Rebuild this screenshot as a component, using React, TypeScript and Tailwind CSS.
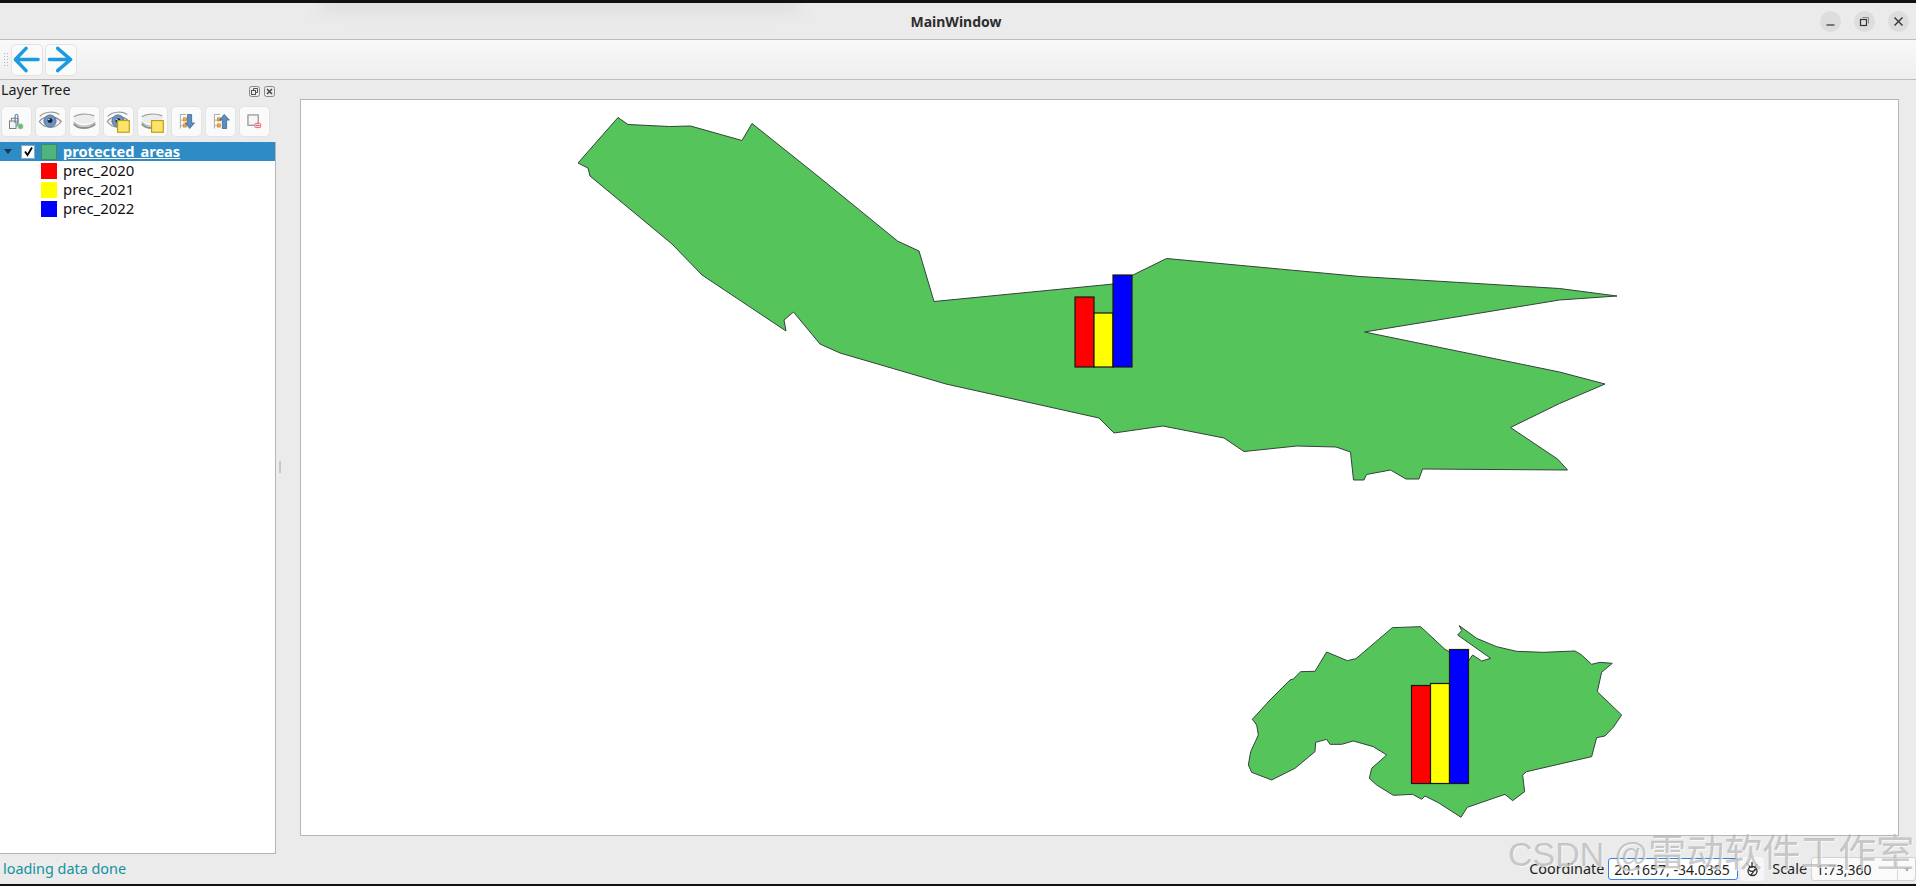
import type { ReactNode } from "react";

const mainArea = "578,163 588,168 590,176 672,244 702,275 786,331 784,320 793.5,312 820,344 840,353 946,384 1099,418 1114,433 1163,426 1224,438 1244,451.5 1297,446 1336,447 1350.5,452 1353.5,480 1364,480 1366.5,474.5 1390.5,470 1406,479 1419,479 1422.5,469 1567.5,470 1557.5,459 1510.5,427.5 1559.5,403.5 1605,384 1559.5,372 1364.5,332 1559.5,300 1617,296 1559.5,288.5 1360,276.5 1166.5,258.5 1133,275 1113.5,284 934,301.5 919,251 897.5,241 819,177 752,123.5 742,140.5 690.5,126 669.5,126.5 628,124.5 618,117.5";
const smallArea = "67,328 120,270 180,210 190,207 212,185 255,184 290,126 352,152 378,146 487,53 572,50 645,118 658,125 716,152 728,135 755,153 782,145 683,75 695,62 688,47 740,85 800,110 860,124 940,127 1035,123 1055,135 1085,163 1110,157 1147,160 1115,187 1102,245 1175,315 1150,352 1125,378 1100,383 1085,440 890,485 878,495 884,545 848,572 825,553 712,592 693,622 625,578 585,558 575,568 548,553 490,556 440,525 418,505 425,475 470,435 430,410 370,393 335,403 300,403 290,388 257,397 255,425 195,475 125,510 65,487 55,465 62,425 85,375 80,345";

function Chart({ x, base, heights, w }: { x: number; base: number; heights: number[]; w: number }) {
    const colors = ["#ff0000", "#ffff00", "#0000ff"];
    return (
        <g stroke="#161616" strokeWidth="1.2">
            {heights.map((h, i) => (
                <rect key={i} x={x + i * w} y={base - h} width={w} height={h} fill={colors[i]} />
            ))}
        </g>
    );
}

function MapView() {
    return (
        <svg width="1597" height="735" viewBox="301 100 1597 735" className="block">
            <polygon points={mainArea} fill="#55c45b" stroke="#33423a" strokeWidth="1" strokeLinejoin="round" />
            <Chart x={1075} base={367} heights={[70, 54, 92]} w={19} />
            <g transform="translate(1230 610) scale(0.3333)">
                <polygon points={smallArea} fill="#55c45b" stroke="#33423a" strokeWidth="3" strokeLinejoin="round" />
            </g>
            <Chart x={1411.5} base={783.5} heights={[98, 100, 134]} w={19} />
        </svg>
    );
}

function ToolButton({ children, size }: { children: ReactNode; size: string }) {
    return (
        <div className={`${size} rounded-[5px] bg-[#fafafa] border border-[#e3e3e3] flex items-center justify-center shrink-0`}>
            {children}
        </div>
    );
}

function Arrow({ back }: { back?: boolean }) {
    return (
        <svg width="31" height="31" viewBox="0 0 31 31" fill="none" stroke="#1b9ae0" strokeWidth="3.6" strokeLinecap="round" strokeLinejoin="round">
            {back ? <path d="M14.5 4 3.5 15.5l11 11.5M4 15.5h23" /> : <path d="M12 4l13.5 11.5L12 27M3.5 15.5h22" />}
        </svg>
    );
}

function Eye() {
    return (
        <>
            <path d="M4 10C9 5 19 4 25 8" fill="none" stroke="#9a9a9a" strokeWidth="1.2" />
            <path d="M3.5 15.5C8 9 20 8 27 15.5 21 24 9 23.5 3.5 15.5Z" fill="#f1f1f1" stroke="#8e8e8e" strokeWidth="1.2" />
            <circle cx="15" cy="15" r="6.5" fill="#6d93c1" stroke="#4c6f9b" strokeWidth="1" />
            <circle cx="15" cy="14.5" r="2.6" fill="#14202e" />
            <circle cx="13.8" cy="13.4" r="0.8" fill="#ffffff" />
        </>
    );
}

function ClosedEye() {
    return (
        <>
            <path d="M4 11C9 7 20 6 26 10 27 15 24 18 15 18 8 18 4 16 4 11Z" fill="#ececec" />
            <path d="M4 10.5C9 7 19 6.5 26 9.5" fill="none" stroke="#a2a2a2" strokeWidth="1.2" />
            <path d="M4 16C9 22 21 22 27 16" fill="none" stroke="#bdbdbd" strokeWidth="1.4" />
            <path d="M4 18C9 24 21 24 27 18" fill="none" stroke="#8f8f8f" strokeWidth="2" />
        </>
    );
}

function YellowCorner() {
    return <rect x="14.5" y="14.5" width="12.500" height="12.500" fill="#fbe36c" stroke="#c49c08" strokeWidth="1.2" />;
}

function TreeArrow({ up }: { up?: boolean }) {
    return (
        <>
            <path d="M9 8h6M9 8v15M9 14h4M9 20h4" fill="none" stroke="#a5a5a5" strokeWidth="1" />
            <rect x="12" y="11.5" width="3.5" height="3.5" fill="#f2a53a" stroke="#d0801a" strokeWidth="0.6" />
            <rect x="12" y="18" width="3.5" height="3.5" fill="#f2a53a" stroke="#d0801a" strokeWidth="0.6" />
            {up ? (
                <path d="M19 8l-5 6h3v9h4.500v-9h3L19 8Z" transform="translate(0.5 0)" fill="#5c8cc0" stroke="#34608f" strokeWidth="0.8" />
            ) : (
                <path d="M16.500 8H21v9h3l-5 6-5-6h2.500V8Z" fill="#5c8cc0" stroke="#34608f" strokeWidth="0.8" />
            )}
        </>
    );
}

function DockIcon({ children }: { children: ReactNode }) {
    return <svg width="31" height="31" viewBox="0 0 31 31">{children}</svg>;
}

function DockButtons() {
    return (
        <div className="flex gap-[3px] pl-[1px] h-[31px] mt-[6px]">
            <ToolButton size="w-[31px] h-[31px]">
                <DockIcon>
                    <rect x="10" y="12" width="7" height="8" fill="#f3f3f3" stroke="#777777" />
                    <rect x="8" y="15" width="7" height="8" fill="#f3f3f3" stroke="#777777" />
                    <path d="M14 17V9.500a1.500 1.500 0 0 1 3 0V17M17 10v9" fill="none" stroke="#5d7ea6" strokeWidth="1.2" />
                    <rect x="17" y="18" width="5.500" height="5.500" rx="1.500" fill="#6dbb7b" stroke="#cfe8d4" strokeWidth="0.6" />
                </DockIcon>
            </ToolButton>
            <ToolButton size="w-[31px] h-[31px]"><DockIcon><Eye /></DockIcon></ToolButton>
            <ToolButton size="w-[31px] h-[31px]"><DockIcon><ClosedEye /></DockIcon></ToolButton>
            <ToolButton size="w-[31px] h-[31px]"><DockIcon><Eye /><YellowCorner /></DockIcon></ToolButton>
            <ToolButton size="w-[31px] h-[31px]"><DockIcon><ClosedEye /><YellowCorner /></DockIcon></ToolButton>
            <ToolButton size="w-[31px] h-[31px]"><DockIcon><TreeArrow /></DockIcon></ToolButton>
            <ToolButton size="w-[31px] h-[31px]"><DockIcon><TreeArrow up /></DockIcon></ToolButton>
            <ToolButton size="w-[31px] h-[31px]">
                <DockIcon>
                    <rect x="8.500" y="8.500" width="11" height="11" fill="#f6f6f6" stroke="#8a8a8a" strokeWidth="1.200" />
                    <rect x="16" y="17.500" width="6" height="4.500" rx="0.800" fill="#f8f8f8" stroke="#ee5a64" strokeWidth="1" />
                    <path d="M17 19.750h4" stroke="#ee5a64" strokeWidth="1.400" />
                </DockIcon>
            </ToolButton>
        </div>
    );
}

function LegendRow({ color, label }: { color: string; label: string }) {
    return (
        <div className="h-[19px] flex items-center pl-[41px] text-[14.9px] text-[#101010]">
            <div className={`w-[16px] h-[16px] ${color}`} />
            <span className="ml-[6px]">{label}</span>
        </div>
    );
}

function LayerTree() {
    return (
        <div className="flex-1 mt-[5px] bg-white border-r border-b border-[#b6b6b6] min-h-0">
            <div className="h-[19px] bg-[#2f8bc6] flex items-center">
                <div className="w-0 h-0 ml-[4px] border-x-[4px] border-x-transparent border-t-[5px] border-t-[#173a55]" />
                <div className="ml-[9px] w-[14px] h-[14px] bg-white border border-[#8aa9bf] flex items-center justify-center">
                    <svg width="11" height="11" viewBox="0 0 11 11" fill="none" stroke="#000000" strokeWidth="1.8">
                        <path d="M2 5.500 4.500 9 9 1.500" />
                    </svg>
                </div>
                <div className="ml-[6px] w-[16px] h-[16px] bg-[#4fb37d] border border-[#3c8a60]" />
                <span className="ml-[6px] text-[14.6px] font-bold text-white underline">protected_areas</span>
            </div>
            <LegendRow color="bg-[#ff0000]" label="prec_2020" />
            <LegendRow color="bg-[#ffff00]" label="prec_2021" />
            <LegendRow color="bg-[#0000ff]" label="prec_2022" />
        </div>
    );
}

function DockHeader() {
    return (
        <div className="h-[20px] flex items-center justify-between pl-[1px] pr-[1px]">
            <span className="text-[14.3px] text-[#1c1c1c]">Layer Tree</span>
            <div className="flex gap-[4px] mt-[2px]">
                <svg width="11" height="11" viewBox="0 0 11 11" fill="none" stroke="#555555">
                    <rect x="0.500" y="0.500" width="10" height="10" rx="2" stroke="#888888" />
                    <rect x="2.500" y="4.500" width="4" height="4" />
                    <path d="M4.500 4.500v-2h4v4h-2" />
                </svg>
                <svg width="11" height="11" viewBox="0 0 11 11" fill="none" stroke="#444444">
                    <rect x="0.500" y="0.500" width="10" height="10" rx="2" stroke="#888888" />
                    <path d="M3 3l5 5M8 3 3 8" strokeWidth="1.500" />
                </svg>
            </div>
        </div>
    );
}

function WindowButton({ children }: { children: ReactNode }) {
    return (
        <div className="w-[21px] h-[21px] rounded-full bg-[#dddddd] flex items-center justify-center">
            <svg width="11" height="11" viewBox="0 0 11 11" fill="none" stroke="#333333" strokeWidth="1">
                {children}
            </svg>
        </div>
    );
}

function TitleBar() {
    return (
        <div className="relative h-[36px] flex items-center bg-[#ebebeb] overflow-hidden">
            <div className="absolute left-[320px] -top-[4px] w-[480px] h-[10px] bg-[#d6d6d6] blur-[8px]" />
            <div className="flex-1" />
            <span className="relative ml-[3px] text-[14px] font-bold text-[#2e2e2e]">MainWindow</span>
            <div className="flex-1 flex justify-end gap-[13px] pr-[7px]">
                <WindowButton><path d="M1.500 9h8" strokeWidth="1.200" /></WindowButton>
                <WindowButton>
                    <rect x="1.500" y="3.500" width="6" height="6" strokeWidth="1.200" />
                    <path d="M3.500 1.500h6v6" stroke="#888888" />
                </WindowButton>
                <WindowButton><path d="M1.500 1.500l8 8M9.500 1.500l-8 8" strokeWidth="1.400" /></WindowButton>
            </div>
        </div>
    );
}

function StatusBar() {
    return (
        <div className="h-[30px] flex items-center pl-[3px] text-[14.4px] text-[#222222] bg-[#ebebeb]">
            <span className="text-[#14919f]">loading data done</span>
            <div className="flex-1" />
            <span>Coordinate</span>
            <div className="ml-[4px] w-[130px] h-[22px] bg-white border border-[#3584e4] rounded-[3px] flex items-center pl-[5px] text-[14px]">
                20.1657, -34.0385
            </div>
            <div className="ml-[2px] w-[24px] h-[24px] rounded-[4px] bg-[#f6f6f6] flex items-center justify-center">
                <svg width="18" height="18" viewBox="0 0 18 18" fill="none" stroke="#2d2d2d">
                    <circle cx="9.500" cy="11" r="4.500" strokeWidth="1.300" />
                    <path d="M4 3l3.500 5M9 2v6M14 4l-2.500 4M6 10c2 2 5 2 7-1M8 15c1-2 3-3 4-6" strokeWidth="1.300" />
                </svg>
            </div>
            <span className="ml-[8px]">Scale</span>
            <div className="ml-[4px] w-[105px] h-[24px] bg-[#fafafa] border border-[#d2d2d2] rounded-[3px] flex items-center pl-[4px] text-[14px]">
                <span className="flex-1">1:73,360</span>
                <div className="w-[18px] h-full border-l border-[#d8d8d8] flex items-center justify-center">
                    <div className="w-0 h-0 border-x-[3px] border-x-transparent border-t-[3px] border-t-[#333333]" />
                </div>
            </div>
        </div>
    );
}

export default function App() {
    return (
        <div className="relative w-[1916px] h-[886px] flex flex-col overflow-hidden bg-[#ebebeb] font-['Noto_Sans',sans-serif]">
            <div className="h-[3px] bg-[#111111]" />
            <TitleBar />

            {/* toolbar */}
            <div className="h-[41px] flex items-center gap-[2px] pl-[3px] border-y border-[#bdbdbd] bg-gradient-to-b from-[#f9f9f9] to-[#eeeeee]">
                <div className="w-[6px] h-[16px] bg-[radial-gradient(#b5b5b5_1px,transparent_1px)] bg-[length:3px_3px]" />
                <ToolButton size="w-[32px] h-[32px]"><Arrow back /></ToolButton>
                <ToolButton size="w-[32px] h-[32px]"><Arrow /></ToolButton>
            </div>

            <div className="flex-1 flex min-h-0">
                <div className="w-[276px] flex flex-col">
                    <DockHeader />
                    <DockButtons />
                    <LayerTree />
                </div>
                <div className="w-[24px] flex items-center">
                    <div className="ml-[3px] w-[2px] h-[12px] bg-[radial-gradient(#c8c8c8_1px,transparent_1px)] bg-[length:2px_3px]" />
                </div>
                <div className="mt-[19px] mb-[18px] mr-[17px] flex-1 bg-white border border-[#b6b6b6]">
                    <MapView />
                </div>
            </div>

            <StatusBar />
            <div className="h-[2px] bg-[#111111]" />

            {/* CSDN watermark */}
            <div className="absolute left-[1508px] top-[825px] whitespace-nowrap text-[#999999]/50 [text-shadow:1px_1px_0_rgba(255,255,255,0.7)] font-['Liberation_Sans','Noto_Sans_CJK_SC',sans-serif]">
                <span className="text-[34px]">CSDN @</span>
                <span className="text-[38px]">雷动软件工作室</span>
            </div>
        </div>
    );
}
